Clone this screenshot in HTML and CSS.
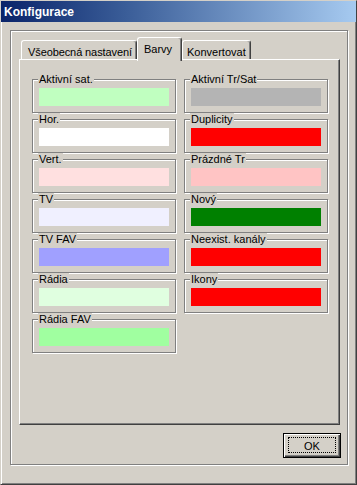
FILE: index.html
```html
<!DOCTYPE html>
<html lang="cs">
<head>
<meta charset="utf-8">
<title>Konfigurace</title>
<link rel="stylesheet" href="styles.css">
</head>
<body>
<div class="window">
  <div class="titlebar">Konfigurace</div>
  <div class="frame">
    <div class="tabs">
      <div class="tab tab-general">Všeobecná nastavení</div>
      <div class="tab tab-colors active">Barvy</div>
      <div class="tab tab-convert">Konvertovat</div>
    </div>
    <div class="panel">
      <div class="col">
        <div class="group"><div class="group-label">Aktivní sat.</div><div class="swatch c-active-sat"></div></div>
        <div class="group"><div class="group-label">Hor.</div><div class="swatch c-hor"></div></div>
        <div class="group"><div class="group-label">Vert.</div><div class="swatch c-vert"></div></div>
        <div class="group"><div class="group-label">TV</div><div class="swatch c-tv"></div></div>
        <div class="group"><div class="group-label">TV FAV</div><div class="swatch c-tvfav"></div></div>
        <div class="group"><div class="group-label">Rádia</div><div class="swatch c-radio"></div></div>
        <div class="group"><div class="group-label">Rádia FAV</div><div class="swatch c-radiofav"></div></div>
      </div>
      <div class="col">
        <div class="group"><div class="group-label">Aktivní Tr/Sat</div><div class="swatch c-active-tr"></div></div>
        <div class="group"><div class="group-label">Duplicity</div><div class="swatch c-red"></div></div>
        <div class="group"><div class="group-label">Prázdné Tr</div><div class="swatch c-empty"></div></div>
        <div class="group"><div class="group-label">Nový</div><div class="swatch c-new"></div></div>
        <div class="group"><div class="group-label">Neexist. kanály</div><div class="swatch c-red"></div></div>
        <div class="group"><div class="group-label">Ikony</div><div class="swatch c-red"></div></div>
      </div>
    </div>
    <div class="buttons"><button class="btn" type="button">OK</button></div>
  </div>
</div>
</body>
</html>
```
FILE: styles.css
```css
* { box-sizing: border-box; }
html, body { margin: 0; padding: 0; background: #d4d0c8; }
body {
  font-family: "Liberation Sans", Arial, sans-serif;
  font-size: 11px;
  color: #000;
}
.window {
  width: 357px;
  height: 485px;
  background: #d4d0c8;
  border: 1px solid;
  border-color: #d4d0c8 #404040 #404040 #d4d0c8;
  box-shadow: inset 1px 1px 0 #fff, inset -1px -1px 0 #808080;
  overflow: hidden;
}
.titlebar {
  height: 21px;
  padding: 2px 0 0 3px;
  line-height: 19px;
  font-size: 12px;
  font-weight: bold;
  color: #fff;
  background: linear-gradient(to right, #0a246a 0%, #3a5d98 35%, #a6caf0 100%);
}
.frame {
  width: 338px;
  height: 435px;
  margin: 8px 0 0 9px;
  padding: 6px 7px 0 8px;
  border: 1px solid #808080;
  box-shadow: inset 1px 1px 0 #fff, 1px 1px 0 #fff;
  display: flex;
  flex-direction: column;
}
.tabs {
  display: flex;
  align-items: flex-end;
  height: 22px;
  padding-left: 2px;
}
.tab {
  height: 19px;
  padding: 5px 0 0 6px;
  line-height: 13px;
  white-space: nowrap;
  background: #d4d0c8;
  border-top: 1px solid #fff;
  border-left: 1px solid #fff;
  border-right: 1px solid #404040;
  border-radius: 3px 3px 0 0;
  box-shadow: inset -1px 0 0 #808080;
}
.tab-general { width: 116px; letter-spacing: -0.1px; }
.tab-colors { width: 45px; }
.tab-convert { width: 69px; padding-left: 4px; }
.tab.active {
  height: 24px;
  margin-bottom: -2px;
  position: relative;
  z-index: 1;
  padding-top: 5px;
}
.panel {
  width: 321px;
  height: 366px;
  border: 1px solid;
  border-color: #fff #404040 #404040 #fff;
  box-shadow: inset -1px -1px 0 #808080;
  padding: 19px 0 0 12px;
  display: flex;
  gap: 8px;
}
.col {
  width: 144px;
  display: flex;
  flex-direction: column;
  gap: 6px;
}
.group {
  width: 144px;
  height: 34px;
  border: 1px solid #808080;
  box-shadow: inset 1px 1px 0 #fff, 1px 1px 0 #fff;
  padding: 0 6px 0 6px;
}
.group-label {
  width: max-content;
  margin: -7px 0 0 -1px;
  padding: 0 1px;
  line-height: 13px;
  height: 13px;
  background: #d4d0c8;
  white-space: nowrap;
}
.swatch {
  width: 130px;
  height: 18px;
  margin-top: 2px;
}
.c-active-sat { background: #c0ffc0; }
.c-hor { background: #ffffff; }
.c-vert { background: #ffe0e0; }
.c-tv { background: #f0f0ff; }
.c-tvfav { background: #a0a0ff; }
.c-radio { background: #e0ffe0; }
.c-radiofav { background: #a0ffa0; }
.c-active-tr { background: #b4b4b4; }
.c-red { background: #ff0000; }
.c-empty { background: #ffc4c4; }
.c-new { background: #008000; }
.buttons {
  display: flex;
  justify-content: flex-end;
  margin-top: 8px;
  margin-right: -1px;
}
.btn {
  position: relative;
  width: 58px;
  height: 25px;
  margin: 0;
  padding: 0;
  font-family: "Liberation Sans", Arial, sans-serif;
  font-size: 11px;
  color: #000;
  background: #d4d0c8;
  border: 1px solid #000;
  border-radius: 0;
  box-shadow: inset 1px 1px 0 #fff, inset -1px -1px 0 #404040, inset -2px -2px 0 #808080;
}
.btn::after {
  content: "";
  position: absolute;
  left: 4px;
  top: 3px;
  right: 4px;
  bottom: 4px;
  border: 1px dotted #000;
}
```
